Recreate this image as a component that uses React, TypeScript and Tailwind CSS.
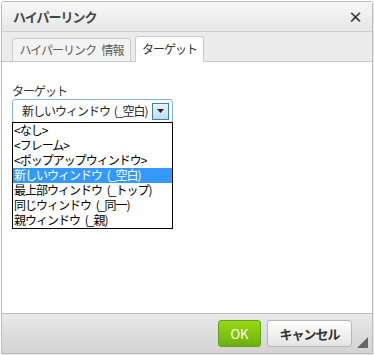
export default function App() {
  const options = [
    '<なし>',
    '<フレーム>',
    '<ポップアップウィンドウ>',
    '新しいウィンドウ (_空白)',
    '最上部ウィンドウ (_トップ)',
    '同じウィンドウ (_同一)',
    '親ウィンドウ (_親)',
  ];
  const selected = 3;
  const font = { fontFamily: '"Noto Sans CJK JP", "Noto Sans", sans-serif' };

  return (
    <div className="w-[374px] h-[355px] bg-white p-px" style={font}>
      <div className="relative flex h-[353px] w-[372px] flex-col overflow-hidden rounded-t-[3px] border border-[#bcbcbc] shadow-[1px_1px_2px_rgba(0,0,0,0.12)]">
        {/* title bar */}
        <div className="flex h-[30px] shrink-0 items-center justify-between border-b border-[#cfcfcf] bg-gradient-to-b from-[#f8f8f8] to-[#e6e6e6] pl-[11px] pr-[9px]">
          <span className="text-[13px] font-bold leading-none tracking-[-1px] text-[#474747]">ハイパーリンク</span>
          <span className="text-[15px] font-bold leading-none text-[#333]">×</span>
        </div>

        {/* tabs */}
        <div className="flex h-[30px] shrink-0 items-end gap-[4px] border-b border-[#c9c9c9] bg-[#ebebeb] pl-[10px]">
          <div className="mb-[-1px] flex h-[24px] w-[119px] items-center justify-center whitespace-nowrap rounded-t-[3px] border border-[#c9c9c9] bg-[#f3f3f3] text-[12px] tracking-[-1px] text-[#5c5c5c] [word-spacing:4px]">
            ハイパーリンク 情報
          </div>
          <div className="mb-[-1px] flex h-[26px] w-[69px] items-center justify-center whitespace-nowrap rounded-t-[3px] border border-[#c9c9c9] border-b-white bg-white text-[12px] tracking-[-1px] text-[#333]">
            ターゲット
          </div>
        </div>

        {/* content */}
        <div className="flex-1 bg-white px-[10px] pt-[22px]">
          <div className="text-[12px] leading-[14px] tracking-[-1px] text-[#333]">ターゲット</div>
          <div className="mt-[1px] flex h-[24px] w-[161px] items-center justify-between whitespace-nowrap rounded-[3px] border border-[#7eb4ea] bg-white pl-[9px] pr-[3px] text-[12px] tracking-[-1px] text-[#222] [word-spacing:2px]">
            <span>新しいウィンドウ (_空白)</span>
            <span className="flex h-[17px] w-[17px] items-center justify-center border border-[#3c7fb1] bg-gradient-to-b from-[#e8f4fb] to-[#bcdcf0]">
              <svg width="7" height="4" viewBox="0 0 7 4">
                <path d="M0 0h7L3.5 4z" fill="#222" />
              </svg>
            </span>
          </div>
          <div className="-mt-px w-[161px] border border-black bg-white text-[12px] leading-[14px] tracking-[-1px] [word-spacing:3px]">
            {options.map((o, i) => (
              <div
                key={o}
                className={
                  i === selected
                    ? 'h-[15px] whitespace-nowrap bg-[#3399ff] pl-px text-white'
                    : 'h-[15px] whitespace-nowrap pl-px text-black'
                }
              >
                {o}
              </div>
            ))}
          </div>
        </div>

        {/* footer */}
        <div className="flex h-[40px] shrink-0 items-center justify-end gap-[6px] border-t border-[#bfbfbf] bg-gradient-to-b from-[#e9e9e9] to-[#d3d3d3] pr-[20px]">
          <button className="h-[27px] w-[43px] rounded-[3px] border border-[#68a01d] bg-gradient-to-b from-[#9ad717] to-[#69b10b] text-[13px] text-white">
            OK
          </button>
          <button className="h-[27px] w-[85px] rounded-[3px] border border-[#b6b6b6] bg-gradient-to-b from-[#ffffff] to-[#e4e4e4] text-[13px] font-bold tracking-[-1px] text-[#333]">
            キャンセル
          </button>
          <svg className="absolute bottom-[5px] right-[4px]" width="11" height="11" viewBox="0 0 11 11">
            <path d="M11 0V11H0z" fill="#666" />
          </svg>
        </div>
      </div>
    </div>
  );
}
